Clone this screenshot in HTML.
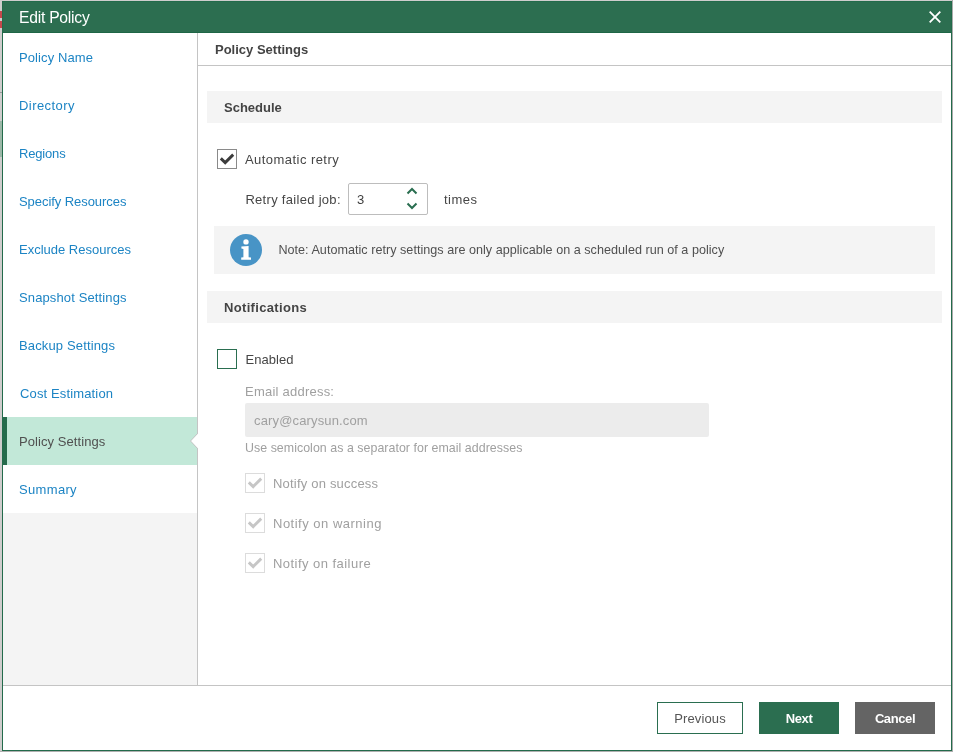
<!DOCTYPE html>
<html><head><meta charset="utf-8">
<style>
*{box-sizing:border-box;margin:0;padding:0}
html,body{width:953px;height:752px;overflow:hidden;background:#cfcdcd;font-family:"Liberation Sans",sans-serif}
.a{position:absolute}
.t{position:absolute;white-space:nowrap;line-height:20px}
#dlg{position:absolute;left:2px;top:1px;width:950px;height:750px;background:#fff;border:1px solid #236b4b}
#title{position:absolute;left:2px;top:1px;width:950px;height:32px;background:#2c6e50;border:1px solid #236b4b;border-bottom:1px solid #1f6646}
.nav{position:absolute;left:19px;font-size:13px;color:#1c84c4;line-height:20px;white-space:nowrap}
.sec{position:absolute;left:207px;width:735px;height:32px;background:#f4f4f4}
.h{font-weight:bold;color:#444;font-size:13px}
.txt{color:#464646;font-size:13px}
.dis{color:#a0a0a0;font-size:13px}
.cb{position:absolute;width:20px;height:20px;border:1px solid #8a8a8a;background:#fff}
.cbd{position:absolute;width:20px;height:20px;border:1px solid #dcdcdc;background:#fff}
.btn{position:absolute;top:702px;height:32px;font-size:13px;text-align:center;line-height:32px;padding-top:1px}
</style></head><body><div id="root" style="position:absolute;left:0;top:0;width:953px;height:752px;will-change:transform">
<!-- backdrop bits -->
<div class="a" style="left:0;top:11px;width:2px;height:7px;background:#c8474c"></div>
<div class="a" style="left:0;top:21px;width:2px;height:7px;background:#c8474c"></div>
<div class="a" style="left:0;top:92px;width:2px;height:1px;background:#999"></div>
<div class="a" style="left:0;top:121px;width:2px;height:36px;background:#9cb8a8"></div>
<div class="a" style="left:952px;top:0;width:1px;height:752px;background:#ababab"></div>
<div class="a" style="left:0;top:751px;width:953px;height:1px;background:#b0b0b0"></div>

<div id="dlg"></div>
<div id="title"></div>
<div id="ttl" class="t" style="left:19px;top:8px;font-size:15.7px;color:#fff;letter-spacing:-0.25px">Edit Policy</div>
<svg class="a" style="left:929px;top:11px" width="12" height="12" viewBox="0 0 12 12"><path d="M0.7 0.7L11.3 11.3M11.3 0.7L0.7 11.3" stroke="#fff" stroke-width="1.8"/></svg>

<!-- sidebar -->
<div class="a" style="left:197px;top:33px;width:1px;height:652px;background:#c4c4c4"></div>
<div class="a" style="left:3px;top:513px;width:194px;height:172px;background:#f4f4f4"></div>
<div class="a" style="left:3px;top:417px;width:194px;height:48px;background:#c2e8d8"></div>
<div class="a" style="left:3px;top:417px;width:4px;height:48px;background:#266b4c"></div>
<svg class="a" style="left:189px;top:432px" width="10" height="18" viewBox="0 0 10 18"><path d="M9 0 L9 1.5 L1.5 9 L9 16.5 L9 18 L10 18 L10 0 Z" fill="#fff"/><path d="M8.5 0 L8.5 1.5 L1.5 9 L8.5 16.5 L8.5 18" stroke="#c4c4c4" stroke-width="1" fill="none"/></svg>

<div id="n0" class="nav" style="top:48px;letter-spacing:0.1px">Policy Name</div>
<div id="n1" class="nav" style="top:96px;letter-spacing:0.44px">Directory</div>
<div id="n2" class="nav" style="top:144px;letter-spacing:-0.17px">Regions</div>
<div id="n3" class="nav" style="top:192px;letter-spacing:-0.06px">Specify Resources</div>
<div id="n4" class="nav" style="top:240px">Exclude Resources</div>
<div id="n5" class="nav" style="top:288px;letter-spacing:0.125px">Snapshot Settings</div>
<div id="n6" class="nav" style="top:336px;letter-spacing:0.14px">Backup Settings</div>
<div id="n7" class="nav" style="left:20px;top:384px;letter-spacing:0.14px">Cost Estimation</div>
<div id="n8" class="nav" style="top:432px;color:#505050;letter-spacing:0.07px">Policy Settings</div>
<div id="n9" class="nav" style="top:480px;letter-spacing:0.33px">Summary</div>

<!-- header -->
<div id="hdr" class="t h" style="left:215px;top:40px">Policy Settings</div>
<div class="a" style="left:198px;top:65px;width:753px;height:1px;background:#c4c4c4"></div>

<!-- schedule -->
<div class="sec" style="top:91px"></div>
<div id="sched" class="t h" style="left:224px;top:98px">Schedule</div>
<div class="cb" style="left:217px;top:149px"></div>
<svg class="a" style="left:217px;top:149px" width="20" height="20" viewBox="0 0 20 20"><path d="M3.8 9.4 L8.2 13.6 L16.2 5.6" stroke="#3c3c3c" stroke-width="2.9" fill="none"/></svg>
<div id="autor" class="t txt" style="left:245px;top:150px;letter-spacing:0.45px">Automatic retry</div>
<div id="retry" class="t txt" style="left:245.4px;top:190px;letter-spacing:0.3px">Retry failed job:</div>
<div class="a" style="left:348px;top:183px;width:80px;height:32px;border:1px solid #bdbdbd;border-radius:2px;background:#fff"></div>
<div class="t txt" style="left:357px;top:190px;color:#404040">3</div>
<svg class="a" style="left:405px;top:186px" width="14" height="26" viewBox="0 0 14 26"><path d="M2.5 7.5 L7 3 L11.5 7.5 M2.5 17.5 L7 22 L11.5 17.5" stroke="#2a6e50" stroke-width="2" fill="none"/></svg>
<div id="times" class="t txt" style="left:444px;top:190px;letter-spacing:0.5px">times</div>

<div class="a" style="left:214px;top:226px;width:721px;height:48px;background:#f4f4f4"></div>
<svg class="a" style="left:230px;top:234px" width="32" height="32" viewBox="0 0 32 32"><circle cx="16" cy="16" r="16" fill="#4894c6"/><circle cx="16" cy="7.9" r="2.7" fill="#fff"/><path d="M11.4 12.6 L18.6 12.1 V23.2 L21 23.6 V25.7 H11.2 V23.6 L13.4 23.2 V15 L11.4 14.6 Z" fill="#fff"/></svg>
<div id="note" class="t" style="left:278.4px;top:240px;font-size:12.6px;color:#505050;letter-spacing:0.025px">Note: Automatic retry settings are only applicable on a scheduled run of a policy</div>

<!-- notifications -->
<div class="sec" style="top:291px"></div>
<div id="notif" class="t h" style="left:224px;top:298px;letter-spacing:0.33px">Notifications</div>
<div class="cb" style="left:217px;top:349px;border-color:#2a6e50"></div>
<div id="enabled" class="t txt" style="left:245.4px;top:350px;letter-spacing:0.07px">Enabled</div>
<div id="email" class="t dis" style="left:245px;top:382px;letter-spacing:0.23px">Email address:</div>
<div class="a" style="left:245px;top:403px;width:464px;height:34px;background:#ececec;border-radius:2px"></div>
<div id="cary" class="t dis" style="left:254px;top:411px;letter-spacing:0.15px">cary@carysun.com</div>
<div id="semi" class="t" style="left:245px;top:438px;font-size:12.4px;color:#a0a0a0;letter-spacing:0.04px">Use semicolon as a separator for email addresses</div>

<div class="cbd" style="left:245px;top:473px"></div>
<svg class="a" style="left:245px;top:473px" width="20" height="20" viewBox="0 0 20 20"><path d="M3.8 9.4 L8.2 13.6 L16.2 5.6" stroke="#c6c6c6" stroke-width="2.9" fill="none"/></svg>
<div id="ns" class="t dis" style="left:273px;top:474px;letter-spacing:0.2px">Notify on success</div>
<div class="cbd" style="left:245px;top:513px"></div>
<svg class="a" style="left:245px;top:513px" width="20" height="20" viewBox="0 0 20 20"><path d="M3.8 9.4 L8.2 13.6 L16.2 5.6" stroke="#c6c6c6" stroke-width="2.9" fill="none"/></svg>
<div id="nw" class="t dis" style="left:273px;top:514px;letter-spacing:0.5px">Notify on warning</div>
<div class="cbd" style="left:245px;top:553px"></div>
<svg class="a" style="left:245px;top:553px" width="20" height="20" viewBox="0 0 20 20"><path d="M3.8 9.4 L8.2 13.6 L16.2 5.6" stroke="#c6c6c6" stroke-width="2.9" fill="none"/></svg>
<div id="nf" class="t dis" style="left:273px;top:554px;letter-spacing:0.46px">Notify on failure</div>

<!-- footer -->
<div class="a" style="left:3px;top:685px;width:948px;height:1px;background:#c4c4c4"></div>
<div id="prev" class="btn" style="left:657px;width:86px;border:1px solid #2a6e50;color:#555;line-height:30px;letter-spacing:0.14px">Previous</div>
<div id="next" class="btn" style="left:759px;width:80px;background:#2b6e50;color:#fff;font-weight:bold;letter-spacing:-0.37px">Next</div>
<div id="cancel" class="btn" style="left:855px;width:80px;background:#646464;color:#fff;font-weight:bold;letter-spacing:-0.4px">Cancel</div>
</div></body></html>
